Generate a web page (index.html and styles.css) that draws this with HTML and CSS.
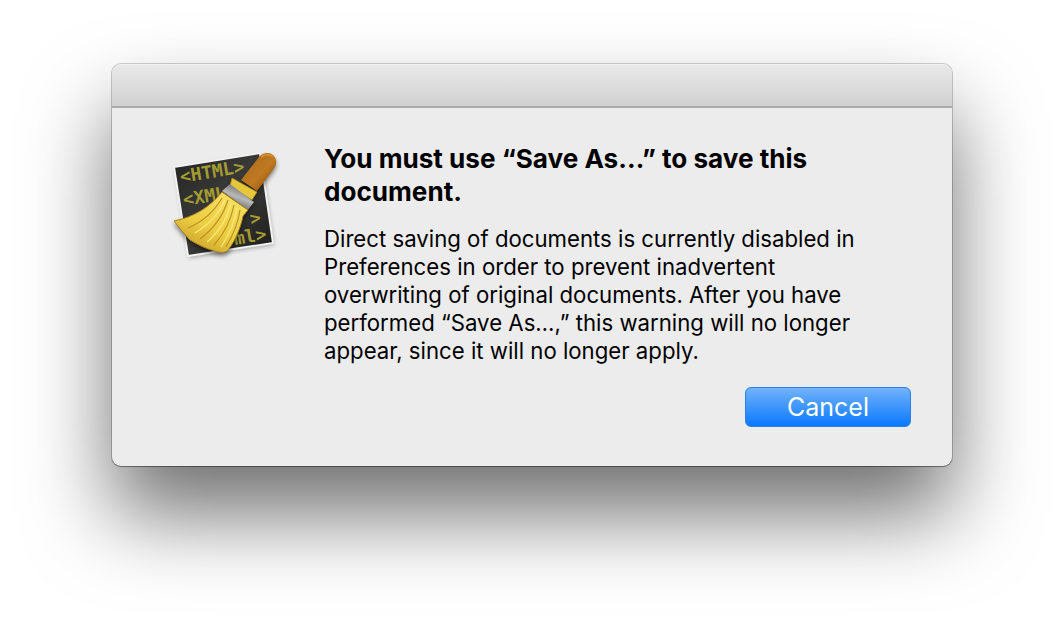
FILE: index.html
```html
<!DOCTYPE html>
<html lang="en">
<head>
<meta charset="utf-8">
<title>Save As</title>
<link rel="stylesheet" href="styles.css">
</head>
<body>
<div class="window">
  <div class="titlebar"></div>
  <div class="content">
    <svg class="icon" width="130" height="130" viewBox="0 0 130 130" aria-hidden="true">
      <defs>
        <linearGradient id="paper" x1="0" y1="0" x2="1" y2="1"><stop offset="0" stop-color="#232321"/><stop offset=".5" stop-color="#3c3c3a"/><stop offset="1" stop-color="#1b1b1a"/></linearGradient>
        <linearGradient id="straw" x1="0.85" y1="0" x2="0.25" y2="1"><stop offset="0" stop-color="#f8e263"/><stop offset=".6" stop-color="#eccd42"/><stop offset="1" stop-color="#c89f2a"/></linearGradient>
        <linearGradient id="band" x1="0.3" y1="0.9" x2="0.7" y2="0.1"><stop offset="0" stop-color="#5f5f5f"/><stop offset=".5" stop-color="#b8b8b8"/><stop offset="1" stop-color="#6a6a6a"/></linearGradient>
        <linearGradient id="handle" x1="0" y1="0" x2="1" y2="1"><stop offset="0" stop-color="#a8651a"/><stop offset=".55" stop-color="#c07a22"/><stop offset="1" stop-color="#7d4508"/></linearGradient>
      </defs>
      <polygon class="card-shadow" points="14,27 100,13 113,103 28,116"/>
      <polygon points="14,27 100,13 113,103 28,116" fill="url(#paper)" stroke="#f2f2f2" stroke-width="2"/>
      <text class="code" transform="translate(21 43) rotate(-9.5)">&lt;HTML&gt;</text>
      <text class="code" transform="translate(24 66) rotate(-9.5)">&lt;XML&gt;</text>
      <text class="code" transform="translate(91 85) rotate(-9.5)">&gt;</text>
      <text class="code" transform="translate(75 105) rotate(-9.5)">ml&gt;</text>
      <g class="broom">
        <path d="M81 40 L99 17 C103 12 111 12 114 16 C118 21 116 26 113 30 L97 51 Z" fill="url(#handle)"/>
        <path d="M101 17 C105 14 110 14 113 17" fill="none" stroke="#d6913a" stroke-width="1.6"/>
        <path d="M72 38 L97 52 L92 60 L70 46 Z" fill="#e6c63a" stroke="#a8841c" stroke-width=".8"/>
        <path d="M62 51 L70 44 L94 62 L88 70 Z" fill="url(#band)"/>
        <path d="M62 52 L88 70 L83 76 C81 86 76 100 68 110 C65 113 60 113 55 111 C47 109 38 105 30 100 C24 94 19 87 14 81 C34 77 50 67 62 52 Z" fill="url(#straw)" stroke="#a98024" stroke-width="1"/>
        <path d="M62 58 C54 72 42 82 28 88 M68 60 C63 76 52 90 40 99 M74 65 C71 80 64 94 54 105 M80 70 C78 84 72 97 66 107" fill="none" stroke="#bb9126" stroke-width="1.2"/>
        <path d="M65 60 C59 74 48 85 35 93 M71 63 C67 79 59 92 47 102 M77 68 C75 82 69 95 61 107" fill="none" stroke="#fbe97e" stroke-width="1.2"/>
      </g>
    </svg>
    <div class="message">
      <h1 class="heading">You must use “Save As…” to save this document.</h1>
      <p class="body-text">Direct saving of documents is currently disabled in Preferences in order to prevent inadvertent overwriting of original documents. After you have performed “Save As…,” this warning will no longer appear, since it will no longer apply.</p>
      <div class="actions"><button class="button" type="button">Cancel</button></div>
    </div>
  </div>
</div>
</body>
</html>
```
FILE: styles.css
```css
html, body {
  margin: 0;
  height: 100%;
  background: #fff;
  overflow: hidden;
}
body {
  padding: 64px 112px 0;
  box-sizing: border-box;
  font-family: Inter, "Liberation Sans", sans-serif;
  color: #000;
}
.window {
  width: 840px;
  height: 402px;
  box-sizing: border-box;
  display: flex;
  flex-direction: column;
  background: #ececec;
  border-radius: 9px;
  box-shadow: 0 0 0 1px rgba(0,0,0,.18), 0 1px 1px rgba(0,0,0,.3), 0 48px 84px rgba(0,0,0,.56);
  overflow: hidden;
}
.titlebar {
  height: 44px;
  flex: none;
  box-sizing: border-box;
  background: linear-gradient(#e9e9e9, #d1d1d1);
  border-top: 1px solid #f2f2f2;
  border-bottom: 2px solid #ababab;
}
.content {
  display: flex;
  flex: 1;
  padding: 0 41px 0 48px;
}
.icon {
  flex: none;
  margin-top: 32px;
  margin-right: 34px;
}
.card-shadow {
  fill: #000;
  opacity: .3;
  filter: blur(2px);
  transform: translate(1px, 2px);
}
.broom {
  filter: drop-shadow(0 3px 2px rgba(0, 0, 0, .45));
}
.code {
  font-family: "DejaVu Sans Mono", monospace;
  font-weight: 700;
  font-size: 18px;
  fill: #a39c32;
}
.message {
  flex: 1;
  padding-top: 34px;
  min-width: 0;
}
.heading {
  margin: 0;
  font-size: 26.1px;
  line-height: 33px;
  font-weight: 700;
}
.body-text {
  margin: 17px 0 0;
  max-width: 545px;
  font-size: 22.2px;
  line-height: 28px;
  font-weight: 400;
}
.actions {
  display: flex;
  justify-content: flex-end;
  margin-top: 22px;
}
.button {
  width: 166px;
  height: 40px;
  padding: 0;
  box-sizing: border-box;
  border: 1px solid #2a7fe8;
  border-radius: 6px;
  background: linear-gradient(#71b3fb, #0a78fd);
  color: #fff;
  font-family: inherit;
  font-size: 25px;
  font-weight: 400;
}
```
